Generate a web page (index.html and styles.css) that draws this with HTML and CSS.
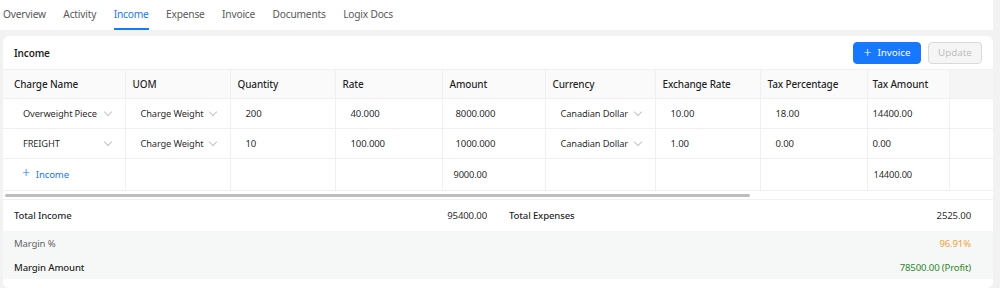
FILE: index.html
```html
<!DOCTYPE html>
<html lang="en">
<head>
    <meta charset="UTF-8">
    <title>Income</title>
    <link rel="stylesheet" href="styles.css">
</head>
<body>
    <div class="tabs">
        <span class="tab">Overview</span>
        <span class="tab">Activity</span>
        <span class="tab active">Income</span>
        <span class="tab">Expense</span>
        <span class="tab">Invoice</span>
        <span class="tab">Documents</span>
        <span class="tab">Logix Docs</span>
    </div>

    <div class="card">
        <div class="card-head">
            <span class="card-title">Income</span>
            <div class="actions">
                <button class="btn primary"><span class="plus">+</span>Invoice</button>
                <button class="btn disabled">Update</button>
            </div>
        </div>

        <div class="table-wrap">
            <table class="charges">
                <colgroup>
                    <col style="width:122px">
                    <col style="width:105px">
                    <col style="width:105px">
                    <col style="width:107px">
                    <col style="width:103px">
                    <col style="width:110px">
                    <col style="width:105px">
                    <col style="width:107px">
                    <col style="width:82px">
                    <col style="width:44px">
                </colgroup>
                <thead>
                    <tr>
                        <th class="first">Charge Name</th>
                        <th>UOM</th>
                        <th>Quantity</th>
                        <th>Rate</th>
                        <th>Amount</th>
                        <th>Currency</th>
                        <th>Exchange Rate</th>
                        <th>Tax Percentage</th>
                        <th class="tight">Tax Amount</th>
                        <th class="fixed"></th>
                    </tr>
                </thead>
                <tbody>
                    <tr>
                        <td class="first"><div class="select"><span>Overweight Piece</span><span class="chev"></span></div></td>
                        <td><div class="select"><span>Charge Weight</span><span class="chev"></span></div></td>
                        <td><div class="input">200</div></td>
                        <td><div class="input">40.000</div></td>
                        <td><div class="input amt">8000.000</div></td>
                        <td><div class="select"><span>Canadian Dollar</span><span class="chev"></span></div></td>
                        <td><div class="input">10.00</div></td>
                        <td><div class="input">18.00</div></td>
                        <td class="tight">14400.00</td>
                        <td class="fixed"></td>
                    </tr>
                    <tr>
                        <td class="first"><div class="select"><span>FREIGHT</span><span class="chev"></span></div></td>
                        <td><div class="select"><span>Charge Weight</span><span class="chev"></span></div></td>
                        <td><div class="input">10</div></td>
                        <td><div class="input">100.000</div></td>
                        <td><div class="input amt">1000.000</div></td>
                        <td><div class="select"><span>Canadian Dollar</span><span class="chev"></span></div></td>
                        <td><div class="input">1.00</div></td>
                        <td><div class="input">0.00</div></td>
                        <td class="tight">0.00</td>
                        <td class="fixed"></td>
                    </tr>
                    <tr class="foot">
                        <td class="first"><span class="add"><span class="plus">+</span>Income</span></td>
                        <td></td>
                        <td></td>
                        <td></td>
                        <td class="sum">9000.00</td>
                        <td></td>
                        <td></td>
                        <td></td>
                        <td class="tight sum">14400.00</td>
                        <td class="fixed"></td>
                    </tr>
                </tbody>
            </table>
            <div class="scrollbar"><div class="thumb"></div></div>
        </div>

        <div class="totals">
            <div class="total">
                <span class="strong">Total Income</span>
                <span>95400.00</span>
            </div>
            <div class="total right">
                <span class="strong">Total Expenses</span>
                <span>2525.00</span>
            </div>
        </div>

        <div class="margins">
            <div class="margin-row">
                <span class="muted">Margin %</span>
                <span class="orange">96.91%</span>
            </div>
            <div class="margin-row">
                <span class="strong">Margin Amount</span>
                <span class="green">78500.00 (Profit)</span>
            </div>
        </div>
    </div>
</body>
</html>
```

FILE: styles.css
```css
/* Reset */
body, div, span, button, table, th, td {
    margin: 0;
    padding: 0;
    font-family: "Noto Sans", "Open Sans", Arial, sans-serif;
}

body {
    background-color: #f2f2f2;
    color: rgba(0, 0, 0, 0.88);
    font-size: 9.6px;
    letter-spacing: -0.15px;
    width: 1000px;
    height: 288px;
    overflow: hidden;
}

/* Tabs */
.tabs {
    width: 993px;
    height: 30px;
    background-color: #ffffff;
    display: flex;
    gap: 17.5px;
    padding-left: 3px;
    box-sizing: border-box;
}

.tab {
    font-size: 10.2px;
    letter-spacing: -0.2px;
    color: #595959;
    padding-top: 1px;
    line-height: 26px;
    border-bottom: 2px solid transparent;
}

.tab.active {
    color: #1677ff;
    border-bottom-color: #1677ff;
}

/* Card */
.card {
    margin: 6px 0 0 3px;
    width: 990px;
    height: 252px;
    background-color: #ffffff;
    border-radius: 6px;
    overflow: hidden;
}

.card-head {
    display: flex;
    align-items: center;
    justify-content: space-between;
    height: 33px;
    padding: 0 11px;
}

.card-title {
    font-weight: 600;
    font-size: 10px;
}

.actions {
    display: flex;
    gap: 7px;
}

.btn {
    height: 22px;
    border-radius: 4px;
    font-size: 9.8px;
    border: 1px solid #d9d9d9;
    display: flex;
    align-items: center;
    justify-content: center;
    white-space: nowrap;
}

.btn.primary {
    background-color: #1677ff;
    border-color: #1677ff;
    color: #ffffff;
    width: 68px;
}

.btn.disabled {
    background-color: #f5f5f5;
    color: #bfbfbf;
    width: 54px;
}

.plus {
    font-size: 14px;
    line-height: 10px;
    font-weight: 300;
    margin-right: 6px;
}

/* Table */
.table-wrap {
    border-top: 1px solid #f0f0f0;
}

.charges {
    border-collapse: collapse;
    table-layout: fixed;
    width: 990px;
}

.charges th, .charges td {
    border-right: 1px solid #f0f0f0;
    border-bottom: 1px solid #f0f0f0;
    text-align: left;
    padding: 0 7px;
    white-space: nowrap;
    overflow: hidden;
}

.charges th {
    background-color: #fafafa;
    font-weight: 500;
    font-size: 10px;
    height: 28px;
}

.charges th.first, .charges td.first {
    padding-left: 11px;
}

.charges td {
    height: 29px;
}

.charges tr.foot td {
    height: 31px;
}

.charges .tight {
    padding-left: 5px;
}

.charges th.fixed {
    background-color: #f5f5f5;
    border-right: none;
}

.charges td.fixed {
    border-right: none;
}

.select, .input {
    padding-left: 8px;
    color: rgba(0, 0, 0, 0.88);
}

.first .select {
    padding-left: 9px;
}

.input.amt {
    padding-left: 6px;
}

.select {
    display: flex;
    align-items: center;
    justify-content: space-between;
    padding-right: 7px;
    font-size: 9.3px;
}

.chev {
    flex-shrink: 0;
    width: 5px;
    height: 5px;
    border-right: 1px solid #c4c4c4;
    border-bottom: 1px solid #c4c4c4;
    transform: rotate(45deg);
    margin: -3px 0 0 4px;
}

.add {
    color: #1677ff;
    font-size: 9.6px;
    padding-left: 8px;
}

.sum {
    font-size: 9.3px;
}

.charges td.sum {
    padding-left: 11px;
}

.charges td.tight.sum {
    padding-left: 6px;
}

.scrollbar {
    height: 9px;
    padding: 3px 0 0 2px;
    border-bottom: 1px solid #f0f0f0;
    box-sizing: border-box;
}

.thumb {
    width: 745px;
    height: 3px;
    border-radius: 2px;
    background-color: #bdbdbd;
}

/* Totals */
.totals {
    display: flex;
    height: 31px;
}

.total {
    width: 50%;
    box-sizing: border-box;
    display: flex;
    align-items: center;
    justify-content: space-between;
    padding: 0 11px;
}

.total.right {
    padding-right: 22px;
}

.strong {
    font-weight: 500;
}

.margins {
    background-color: #f6f7f7;
    padding: 0 22px 0 11px;
}

.margin-row {
    display: flex;
    justify-content: space-between;
    align-items: center;
    height: 24px;
}

.muted {
    color: #666666;
}

.orange {
    color: #f2a43a;
}

.green {
    color: #2b8a2b;
}
```
